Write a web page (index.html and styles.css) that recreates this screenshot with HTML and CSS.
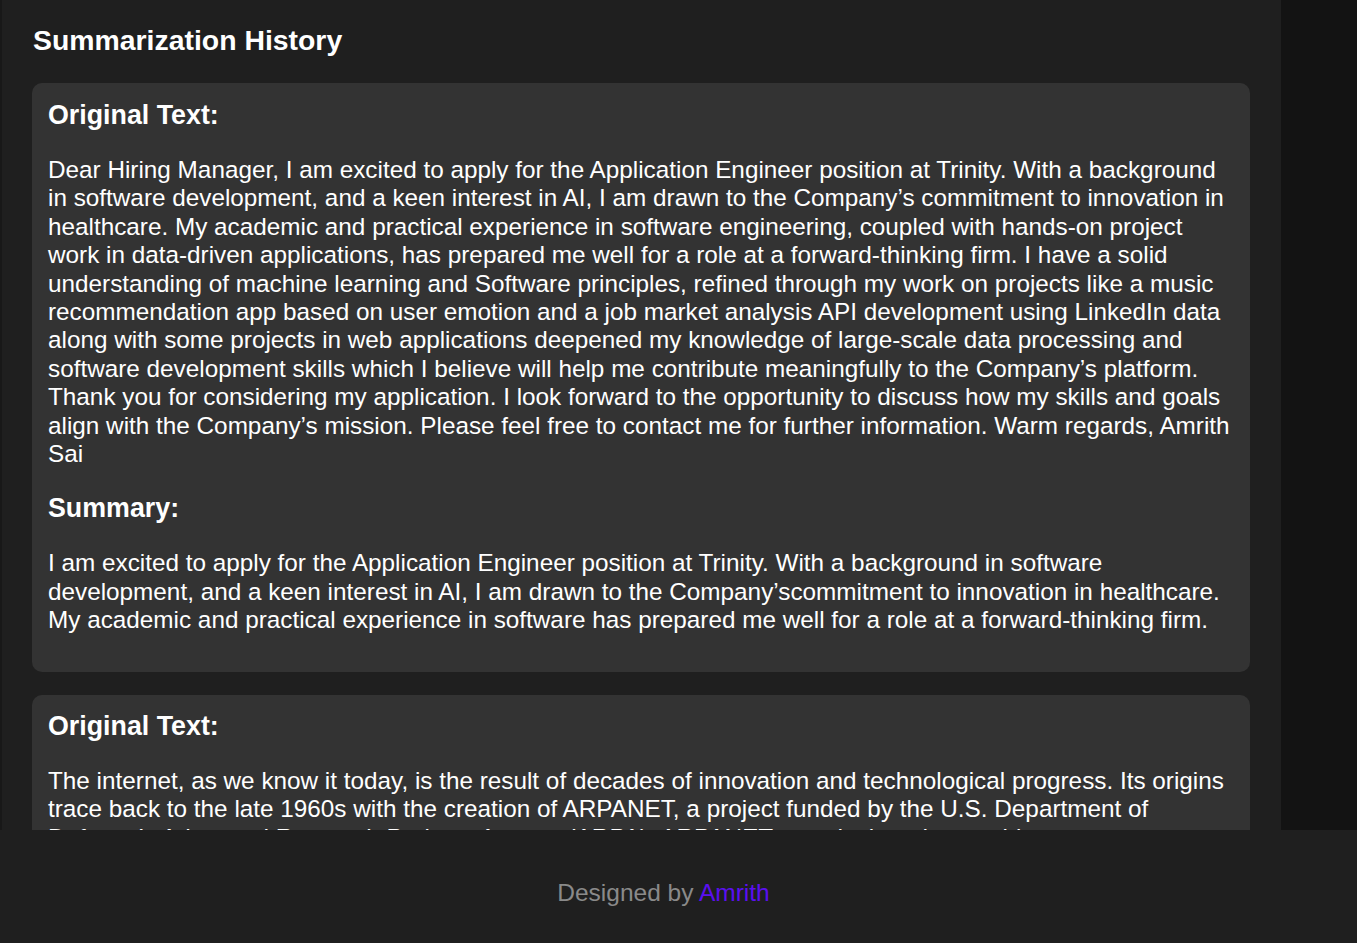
FILE: index.html
```html
<!DOCTYPE html>
<html lang="en">
<head>
<meta charset="utf-8">
<title>Summarization History</title>
<link rel="stylesheet" href="styles.css">
</head>
<body>
<div class="app">
  <div class="edge"></div>
  <main class="panel">
    <h2 class="title">Summarization History</h2>
    <section class="card">
      <h3 class="label">Original Text:</h3>
      <p class="text">Dear Hiring Manager, I am excited to apply for the Application Engineer position at Trinity. With a background in software development, and a keen interest in AI, I am drawn to the Company’s commitment to innovation in healthcare. My academic and practical experience in software engineering, coupled with hands-on project work in data-driven applications, has prepared me well for a role at a forward-thinking firm. I have a solid understanding of machine learning and Software principles, refined through my work on projects like a music recommendation app based on user emotion and a job market analysis API development using LinkedIn data along with some projects in web applications deepened my knowledge of large-scale data processing and software development skills which I believe will help me contribute meaningfully to the Company’s platform. Thank you for considering my application. I look forward to the opportunity to discuss how my skills and goals align with the Company’s mission. Please feel free to contact me for further information. Warm regards, Amrith Sai</p>
      <h3 class="label">Summary:</h3>
      <p class="text">I am excited to apply for the Application Engineer position at Trinity. With a background in software development, and a keen interest in AI, I am drawn to the Company’scommitment to innovation in healthcare. My academic and practical experience in software has prepared me well for a role at a forward-thinking firm.</p>
    </section>
    <section class="card">
      <h3 class="label">Original Text:</h3>
      <p class="text">The internet, as we know it today, is the result of decades of innovation and technological progress. Its origins trace back to the late 1960s with the creation of ARPANET, a project funded by the U.S. Department of Defense’s Advanced Research Projects Agency (ARPA). ARPANET was designed to enable computers to communicate with each other over long distances, sharing resources and information in a decentralized way.</p>
    </section>
  </main>
  <div class="side"></div>
</div>
<footer class="footer">
  <p>Designed by <span class="author">Amrith</span></p>
</footer>
</body>
</html>
```

FILE: styles.css
```css
html, body {
  margin: 0;
  padding: 0;
  background: #131313;
  font-family: "Liberation Sans", Arial, sans-serif;
  color: #ffffff;
}

.app {
  display: flex;
  height: 830px;
  overflow: hidden;
}

.edge {
  width: 2px;
  background: #181818;
  flex: none;
}

.panel {
  width: 1279px;
  flex: none;
  background: #1f1f1f;
  padding: 0 31px 0 30px;
  box-sizing: border-box;
  overflow: hidden;
}

.side {
  flex: 1;
  background: #131313;
}

.title {
  margin: 0;
  padding: 23px 0 26px 1px;
  font-size: 28.4px;
  font-weight: bold;
  line-height: 34px;
}

.card {
  background: #333333;
  border-radius: 10px;
  padding: 17px 16px 37px;
  margin-bottom: 23px;
}

.card + .card {
  padding-top: 16px;
}

.label {
  margin: 0 0 26px;
  font-size: 26.8px;
  line-height: 30px;
  font-weight: bold;
}

.text {
  margin: 0 0 25px;
  font-size: 24.3px;
  line-height: 28.4px;
}

.text:last-child {
  margin-bottom: 0;
}

.footer {
  height: 113px;
  background: #1f1f1f;
  display: flex;
  align-items: center;
  justify-content: center;
}

.footer p {
  margin: 0;
  padding-top: 12px;
  font-size: 24.5px;
  color: #8a8a8a;
  transform: translateX(-15px);
}

.author {
  color: #5b0ff0;
}
```
